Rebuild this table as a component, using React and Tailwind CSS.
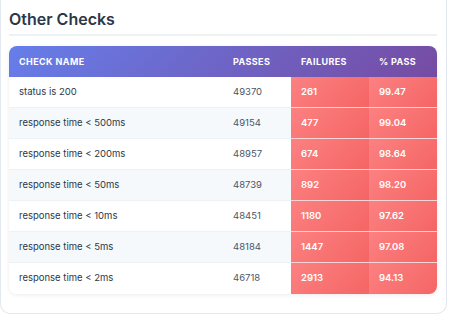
import React from "react";

const rows = [
  ["status is 200", 49370, 261, "99.47"],
  ["response time < 500ms", 49154, 477, "99.04"],
  ["response time < 200ms", 48957, 674, "98.64"],
  ["response time < 50ms", 48739, 892, "98.20"],
  ["response time < 10ms", 48451, 1180, "97.62"],
  ["response time < 5ms", 48184, 1447, "97.08"],
  ["response time < 2ms", 46718, 2913, "94.13"],
];

export default function App() {
  return (
    <div className="w-[451px] h-[322px] bg-white overflow-hidden" style={{ fontFamily: "Inter, 'Noto Sans', sans-serif" }}>
      <div className="w-[447px] border-x border-b border-[#e2e8f0] rounded-b-[10px] pl-[8px] pr-[9px] pb-[19px] pt-[7px]">
        <h2 className="text-[16px] leading-[24px] font-semibold text-[#2d3748] pb-[3px] border-b-2 border-[#edf2f7]">Other Checks</h2>
        <div className="mt-[10px] rounded-[8px] overflow-hidden shadow-[0_1px_4px_rgba(0,0,0,0.08)] bg-white">
          <div className="grid grid-cols-[214px_68px_78px_68px] h-[31px] items-center bg-[linear-gradient(135deg,#667eea_0%,#764ba2_100%)] text-white text-[9px] font-bold uppercase tracking-[0.4px]">
            <div className="pl-[10px]">Check Name</div>
            <div className="pl-[10px]">Passes</div>
            <div className="pl-[10px]">Failures</div>
            <div className="pl-[10px]">% Pass</div>
          </div>
          {rows.map((r, i) => (
            <div key={i} className={`grid grid-cols-[214px_68px_78px_68px] h-[31px] text-[9.5px] ${i % 2 === 1 ? "bg-[#f5f9fc]" : "bg-white"}`}>
              <div className={`pl-[10px] flex items-center text-[#2d3748] ${i < 6 ? "border-b border-[#edf2f7]" : ""}`}>{r[0]}</div>
              <div className={`pl-[10px] flex items-center text-[#4a5568] ${i < 6 ? "border-b border-[#edf2f7]" : ""}`}>{r[1]}</div>
              <div className={`pl-[10px] flex items-center text-white font-semibold bg-[linear-gradient(135deg,#fc8181_0%,#f56565_100%)] ${i < 6 ? "border-b border-[#fbd5d5]" : ""}`}>{r[2]}</div>
              <div className={`pl-[10px] flex items-center text-white font-semibold bg-[linear-gradient(135deg,#fc8181_0%,#f56565_100%)] ${i < 6 ? "border-b border-[#fbd5d5]" : ""}`}>{r[3]}</div>
            </div>
          ))}
        </div>
      </div>
    </div>
  );
}
